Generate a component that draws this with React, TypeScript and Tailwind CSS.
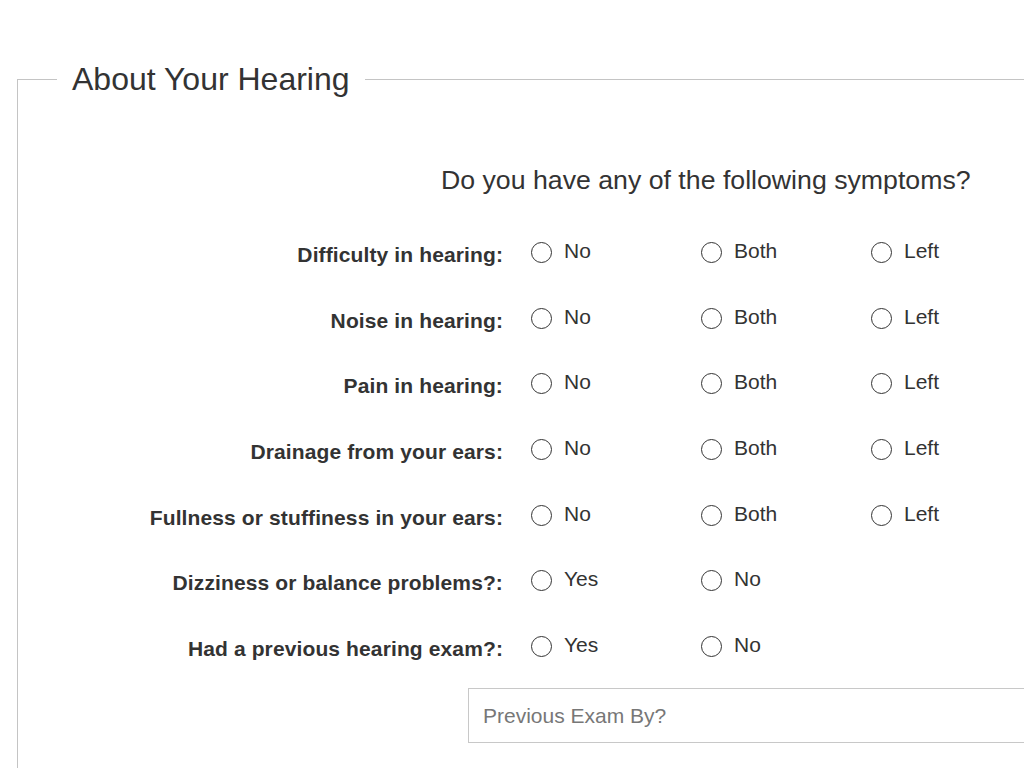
const rows: { label: string; options: string[] }[] = [
  { label: "Difficulty in hearing:", options: ["No", "Both", "Left"] },
  { label: "Noise in hearing:", options: ["No", "Both", "Left"] },
  { label: "Pain in hearing:", options: ["No", "Both", "Left"] },
  { label: "Drainage from your ears:", options: ["No", "Both", "Left"] },
  { label: "Fullness or stuffiness in your ears:", options: ["No", "Both", "Left"] },
  { label: "Dizziness or balance problems?:", options: ["Yes", "No"] },
  { label: "Had a previous hearing exam?:", options: ["Yes", "No"] },
];

const Radio = ({ text }: { text: string }) => (
  <label className="flex w-[170px] items-center gap-[12px] cursor-pointer">
    <span className="block h-[21px] w-[21px] shrink-0 rounded-full border-[1.5px] border-[#333]" />
    <span className="mb-[3px] text-[21px] leading-[24px] text-[#333]">{text}</span>
  </label>
);

const App = () => {
  return (
    <div
      className="h-[768px] w-[1024px] overflow-hidden bg-white"
      style={{ fontFamily: '"Liberation Sans", Arial, sans-serif' }}
    >
      <div className="pl-[17px] pt-[61px]">
        <fieldset className="min-h-[760px] w-[1100px] border border-[#c4c4c4]">
          <legend className="ml-[39px] px-[15px] text-[32px] leading-[36px] text-[#333]">
            About Your Hearing
          </legend>

          <h3 className="ml-[423px] mt-[67px] text-[26.7px] leading-[32px] text-[#333]">
            Do you have any of the following symptoms?
          </h3>

          {/* symptom rows */}
          <div className="mt-[23.5px]">
            {rows.map((row) => (
              <div className="flex h-[65.7px] items-center" key={row.label}>
                <div className="mt-[5px] w-[485px] text-right text-[21px] font-bold leading-[24px] tracking-[0.12px] text-[#333]">
                  {row.label}
                </div>
                <div className="ml-[28px] flex">
                  {row.options.map((opt) => (
                    <Radio text={opt} key={opt} />
                  ))}
                </div>
              </div>
            ))}
          </div>

          <div className="ml-[450px] mt-[9px]">
            <input
              type="text"
              placeholder="Previous Exam By?"
              className="h-[55px] w-[620px] border border-[#c8c8c8] px-[14px] text-[21px] text-[#333] outline-none placeholder:text-[#777]"
            />
          </div>
        </fieldset>
      </div>
    </div>
  );
};

export default App;
